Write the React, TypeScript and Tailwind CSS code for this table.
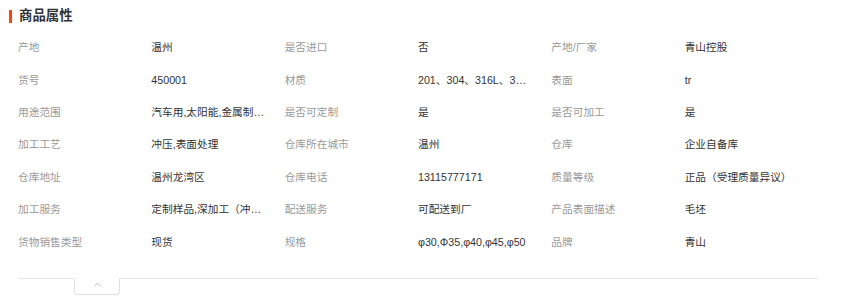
import { ChevronUp } from 'lucide-react';

type Attr = { label: string; value: string };

const attrs: Attr[] = [
  { label: '产地', value: '温州' },
  { label: '是否进口', value: '否' },
  { label: '产地/厂家', value: '青山控股' },
  { label: '货号', value: '450001' },
  { label: '材质', value: '201、304、316L、321、310S' },
  { label: '表面', value: 'tr' },
  { label: '用途范围', value: '汽车用,太阳能,金属制品,五金' },
  { label: '是否可定制', value: '是' },
  { label: '是否可加工', value: '是' },
  { label: '加工工艺', value: '冲压,表面处理' },
  { label: '仓库所在城市', value: '温州' },
  { label: '仓库', value: '企业自备库' },
  { label: '仓库地址', value: '温州龙湾区' },
  { label: '仓库电话', value: '13115777171' },
  { label: '质量等级', value: '正品（受理质量异议）' },
  { label: '加工服务', value: '定制样品,深加工（冲压）' },
  { label: '配送服务', value: '可配送到厂' },
  { label: '产品表面描述', value: '毛坯' },
  { label: '货物销售类型', value: '现货' },
  { label: '规格', value: 'φ30,Φ35,φ40,φ45,φ50' },
  { label: '品牌', value: '青山' },
];

export default function App() {
  return (
    <div
      className="w-[853px] h-[300px] bg-white overflow-hidden"
      style={{ fontFamily: '"Liberation Sans", "Noto Sans CJK SC", sans-serif' }}
    >
      <div className="flex items-center pt-[6px] pl-[9px] h-[25px]">
        <span className="w-[3px] h-[13px] bg-[#ff4400] mt-[1px]" />
        <h3 className="ml-[7px] text-[13.4px] font-bold text-[#333] leading-none">商品属性</h3>
      </div>

      <div className="ml-[18px] w-[800px] mt-[6px] grid grid-cols-6 auto-rows-[32.4px] text-[10.7px] items-center">
        {attrs.map((a) => (
          <div key={a.label} className="contents">
            <span className="text-[#999] truncate pr-[10px]">{a.label}</span>
            <span className="text-[#333] truncate pr-[20px]">{a.value}</span>
          </div>
        ))}
      </div>

      <div className="ml-[18px] w-[800px] mt-[20px] border-t border-[#e5e5e5] relative">
        <div className="absolute left-[56px] top-[-1px] w-[46px] h-[17px] bg-white border border-t-0 border-[#e0e0e0] rounded-b-[4px] flex items-start justify-center pt-[1px]">
          <ChevronUp size={11} className="text-[#999]" strokeWidth={1.5} />
        </div>
      </div>
    </div>
  );
}
